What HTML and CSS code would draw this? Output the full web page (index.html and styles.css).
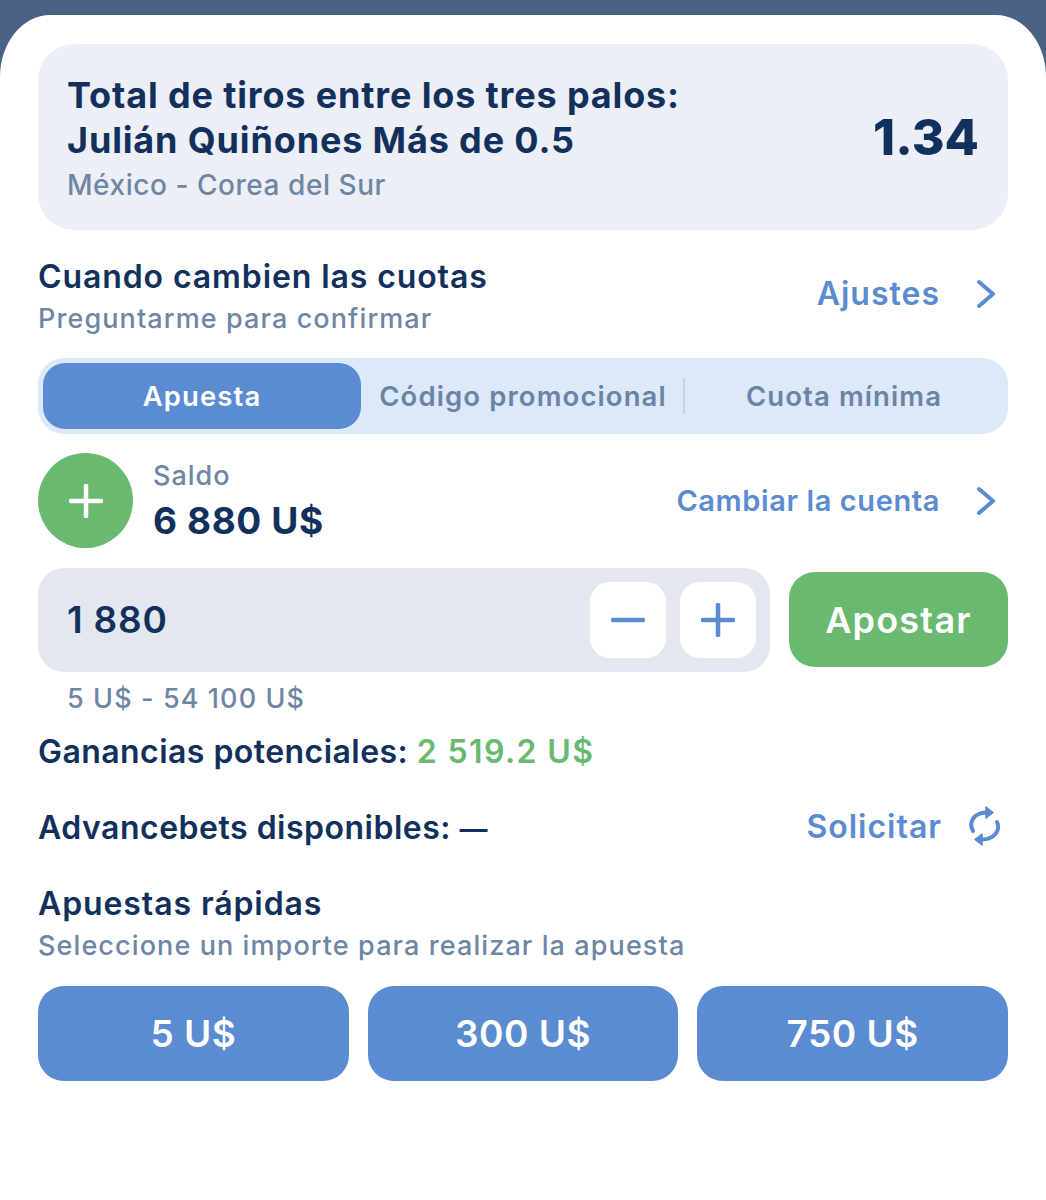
FILE: index.html
```html
<!DOCTYPE html>
<html lang="es">
<head>
<meta charset="utf-8">
<title>Apuesta</title>
<link rel="stylesheet" href="styles.css">
</head>
<body>
<main class="sheet">
  <section class="ticket">
    <div class="ticket-text">
      <div class="ticket-title">Total de tiros entre los tres palos:<br>Julián Quiñones Más de 0.5</div>
      <div class="ticket-match">México - Corea del Sur</div>
    </div>
    <div class="ticket-odds">1.34</div>
  </section>

  <section class="row odds-row">
    <div>
      <div class="heading">Cuando cambien las cuotas</div>
      <div class="sub">Preguntarme para confirmar</div>
    </div>
    <a class="action action-lg action-raised">Ajustes
      <svg class="chev" viewBox="0 0 20 30" width="20" height="30"><path d="M3 3l14 12L3 27" /></svg>
    </a>
  </section>

  <nav class="tabs">
    <div class="tab tab-active">Apuesta</div>
    <div class="tab tab-promo">Código promocional</div>
    <div class="tab-sep"></div>
    <div class="tab tab-min">Cuota mínima</div>
  </nav>

  <section class="row balance-row">
    <div class="balance">
      <div class="add-circle">
        <svg viewBox="0 0 34 34" width="34" height="34"><path d="M17 2v30M2 17h30"/></svg>
      </div>
      <div class="balance-text">
        <div class="balance-label">Saldo</div>
        <div class="balance-value">6 880 U$</div>
      </div>
    </div>
    <a class="action action-md">Cambiar la cuenta
      <svg class="chev" viewBox="0 0 20 30" width="20" height="30"><path d="M3 3l14 12L3 27" /></svg>
    </a>
  </section>

  <section class="stake-row">
    <div class="stake">
      <div class="stake-value">1 880</div>
      <div class="stepper">
        <div class="step"><svg viewBox="0 0 34 34" width="34" height="34"><path d="M2 17h30"/></svg></div>
        <div class="step"><svg viewBox="0 0 34 34" width="34" height="34"><path d="M17 2v30M2 17h30"/></svg></div>
      </div>
    </div>
    <div class="bet-btn">Apostar</div>
  </section>
  <div class="limits">5 U$ - 54 100 U$</div>

  <div class="potential">Ganancias potenciales: <span class="green">2 519.2 U$</span></div>

  <section class="row advance-row">
    <div class="advance-text">Advancebets disponibles: <span class="dash">—</span></div>
    <a class="action action-request">Solicitar
      <svg class="refresh" viewBox="0 0 36 42" width="36" height="42">
        <path class="refresh-line" d="M7 26C2 17 8 8 20 7.500M31 17C35 26 28 34 16 34.500"/>
        <path class="refresh-head" d="M20 2l7 5.500-7 5.500zM16 29l-7 5.500 7 5.500z"/>
      </svg>
    </a>
  </section>

  <section class="quick">
    <div class="heading">Apuestas rápidas</div>
    <div class="sub">Seleccione un importe para realizar la apuesta</div>
    <div class="quick-grid">
      <div class="quick-btn">5 U$</div>
      <div class="quick-btn">300 U$</div>
      <div class="quick-btn">750 U$</div>
    </div>
  </section>
</main>
</body>
</html>
```

FILE: styles.css
```css
* { box-sizing: border-box; }
html, body { margin: 0; height: 100%; }
body {
  background: #4a6285;
  font-family: Inter, "Liberation Sans", sans-serif;
  color: #12305c;
  overflow: hidden;
  padding-top: 15px;
}
.sheet {
  background: #fff;
  height: 1185px;
  border-radius: 50px 50px 0 0 / 62px 62px 0 0;
  padding: 29px 38px 0;
}
.ticket {
  background: #eceff5;
  border-radius: 36px;
  height: 186px;
  padding: 1px 29px 0 29px;
  display: flex;
  align-items: center;
  justify-content: space-between;
}
.ticket-title { font-size: 36px; line-height: 45px; font-weight: 700; letter-spacing: .85px; }
.ticket-match { font-size: 28px; line-height: 34px; margin-top: 5px; color: #6e86a4; font-weight: 500; letter-spacing: .55px; }
.ticket-odds { font-size: 50px; font-weight: 800; margin-bottom: 2px; }
.row { display: flex; justify-content: space-between; align-items: center; }
.odds-row { margin-top: 27px; padding-right: 12px; }
.heading { font-size: 32px; line-height: 40px; font-weight: 600; letter-spacing: .9px; }
.sub { font-size: 27px; line-height: 34px; margin-top: 5px; color: #6e86a4; font-weight: 500; letter-spacing: 1.1px; }
.action { display: flex; align-items: center; color: #5b8bd0; font-weight: 600; }
.action-lg { font-size: 32px; gap: 36px; letter-spacing: 1px; }
.action-raised { margin-bottom: 6px; }
.action-md { font-size: 29px; gap: 36px; letter-spacing: .6px; }
.action-request { font-size: 32px; gap: 24px; letter-spacing: 1px; margin-bottom: 4px; }
.chev path { fill: none; stroke: #5b8bd0; stroke-width: 4; stroke-linecap: round; stroke-linejoin: round; }
.tabs {
  margin-top: 22px;
  height: 76px;
  background: #dbe9f9;
  border-radius: 26px;
  padding: 5px;
  display: flex;
  align-items: center;
}
.tab { font-size: 27.5px; font-weight: 600; color: #6b84a4; text-align: center; letter-spacing: 1.1px; }
.tab-active {
  width: 318px;
  height: 66px;
  line-height: 66px;
  background: #5b8bd0;
  color: #fff;
  border-radius: 22px;
}
.tab-promo { width: 322px; padding-left: 2px; }
.tab-sep { width: 2px; height: 36px; background: #c4d2e2; }
.tab-min { flex: 1; }
.balance-row { margin-top: 19px; padding-right: 12px; }
.balance { display: flex; align-items: center; gap: 20px; }
.balance-text { padding-top: 2px; }
.add-circle {
  width: 95px;
  height: 95px;
  border-radius: 50%;
  background: #6ab971;
  display: flex;
  align-items: center;
  justify-content: center;
}
.add-circle path { stroke: #fff; stroke-width: 4.5; stroke-linecap: round; }
.balance-label { font-size: 27px; line-height: 34px; color: #6e86a4; font-weight: 500; letter-spacing: 1px; }
.balance-value { font-size: 37px; line-height: 48px; font-weight: 700; margin-top: 4px; letter-spacing: .6px; }
.stake-row { margin-top: 20px; display: flex; align-items: center; gap: 19px; }
.stake {
  width: 732px;
  height: 104px;
  background: #e3e8ef;
  border-radius: 26px;
  padding: 0 14px 0 29px;
  display: flex;
  align-items: center;
  justify-content: space-between;
}
.stake-value { font-size: 37px; font-weight: 600; letter-spacing: .8px; margin-bottom: 2px; }
.stepper { display: flex; gap: 14px; }
.step {
  width: 76px;
  height: 76px;
  background: #fff;
  border-radius: 20px;
  display: flex;
  align-items: center;
  justify-content: center;
}
.step path { stroke: #5b8bd0; stroke-width: 4.5; stroke-linecap: round; }
.bet-btn {
  flex: 1;
  height: 95px;
  line-height: 97px;
  margin-bottom: 2px;
  background: #6ab971;
  color: #fff;
  border-radius: 26px;
  text-align: center;
  font-size: 36px;
  font-weight: 600;
  letter-spacing: 1.2px;
}
.limits { margin: 10px 0 0 29px; font-size: 27px; line-height: 34px; color: #6e86a4; font-weight: 500; letter-spacing: 1.1px; }
.potential { margin-top: 16px; font-size: 32px; line-height: 40px; font-weight: 600; letter-spacing: .45px; }
.green { color: #6ab971; font-weight: 600; letter-spacing: 1.4px; }
.advance-row { margin-top: 33px; padding-right: 6px; }
.advance-text { font-size: 32px; line-height: 40px; font-weight: 600; letter-spacing: .5px; }
.dash { font-size: 28px; }
.refresh-line { fill: none; stroke: #5b8bd0; stroke-width: 4; stroke-linecap: round; }
.refresh-head { fill: #5b8bd0; stroke: #5b8bd0; stroke-width: 1.5; stroke-linejoin: round; }
.quick { margin-top: 33px; }
.quick-grid { margin-top: 23px; display: grid; grid-template-columns: repeat(3, 1fr); gap: 19px; }
.quick-btn {
  height: 95px;
  line-height: 95px;
  background: #5b8bd0;
  color: #fff;
  border-radius: 26px;
  text-align: center;
  font-size: 37px;
  font-weight: 600;
  letter-spacing: .5px;
}
```
